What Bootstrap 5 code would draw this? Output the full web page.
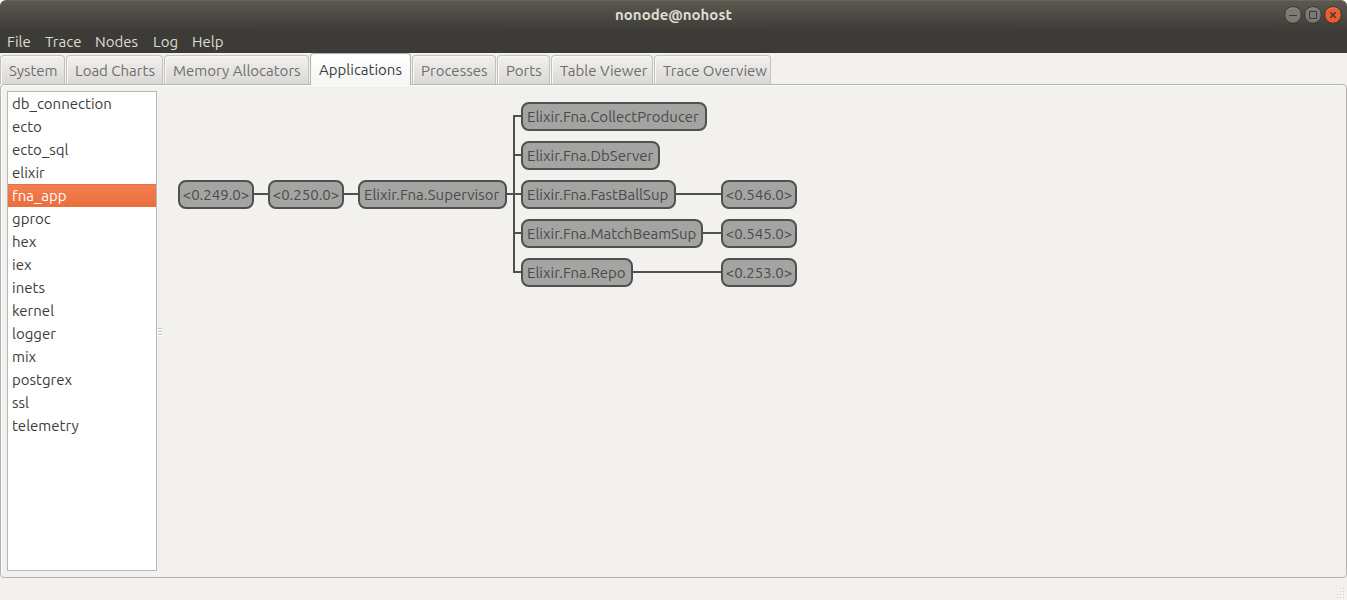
<!DOCTYPE html>
<html lang="en">
<head>
<meta charset="utf-8">
<meta name="viewport" content="width=device-width, initial-scale=1">
<title>nonode@nohost</title>
<link href="https://cdn.jsdelivr.net/npm/bootstrap@5.3.0/dist/css/bootstrap.min.css" rel="stylesheet">
<style>
  body { font-family: Ubuntu, "Noto Sans", sans-serif; font-size: 15px; line-height: 24px; color: #3c3c3c; background: #fff; }
  button { font: inherit; }
  .app-window { background: #f2f1ef; border-radius: 6px 6px 0 0; }

  /* title bar and menu */
  .window-head { height: 53px; background: linear-gradient(#5c584f 0, #3c3b37 30px); border-top: 1px solid #68655c; border-radius: 6px 6px 0 0; color: #dfdbd2; }
  .title-row { height: 29px; }
  .title-row h1 { font-size: 15px; font-weight: 700; line-height: 28px; }
  .window-buttons { right: 4px; top: 4px; }
  .window-buttons button { width: 20px; height: 20px; }
  .menu-row { display: grid; grid-template-columns: 38px 50px 58px 39px 40px; padding-left: 7px; }
  .menu-row a { color: #dfdbd2; text-decoration: none; white-space: nowrap; }

  /* tabs */
  .tab-strip { display: grid; grid-template-columns: 65px 97px 145px 101px 84px 53px 102px 117px; column-gap: 1px; height: 32px; margin-bottom: -1px; border: 0; align-items: end; position: relative; }
  .tab-strip .nav-link { width: 100%; height: 29px; margin: 0 0 1px; padding: 0 0 0 8px; line-height: 25px; text-align: left; white-space: nowrap; color: #6e6e6c; border: 1px solid #c4c2bd; border-bottom: 0; border-radius: 4px 4px 0 0; background: linear-gradient(#f2f1f0, #dad8d5); box-shadow: inset 1px 1px #f8f8f7; }
  .tab-strip .nav-link.active { height: 32px; margin: 0; padding-top: 1px; line-height: 30px; color: #3c3c3c; border-color: #b3b1ac; background: linear-gradient(#fff, #f5f5f4); }

  /* pane */
  .pane { border: 1px solid #b5b3ae; border-radius: 4px; padding: 6px; box-shadow: inset 1px 1px #fff; }
  .app-list { width: 150px; border: 1px solid #bab8b3; border-radius: 0; background: #fff; }
  .app-list .list-group-item { border: 0; padding: 0 4px; height: 23px; color: #3c3c3c; background: #fff; }
  .app-list .list-group-item.active { margin: 0; color: #fff; background: linear-gradient(#f37f50, #eb6e3c); box-shadow: inset 0 1px #e4733f; }
  .sash { width: 8px; }
  .sash svg { display: block; }
  .tree-canvas { min-width: 640px; }
  .status { height: 22px; }

  /* process tree: node positions on the canvas */
  .tree-canvas svg { position: absolute; left: 0; top: 0; }
  .proc { position: absolute; height: 29px; padding: 0 0 0 4px; line-height: 25px; text-align: left; white-space: nowrap; color: #4b4b4a; background: #a4a4a2; border: 2px solid #50504e; border-radius: 8px; }
  .pid { width: 76px; padding: 0; text-align: center; }
  .row-a { top: 11px; } .row-b { top: 50px; } .row-c { top: 89px; } .row-d { top: 128px; } .row-e { top: 167px; }
  .level-1 { left: 13px; } .level-2 { left: 103px; } .level-3 { left: 193px; } .level-4 { left: 356px; } .level-5 { left: 556px; }
  .supervisor { width: 149px; } .producer { width: 186px; } .db { width: 139px; } .fastball { width: 155px; } .matchbeam { width: 182px; } .repo { width: 112px; }
</style>
</head>
<body>
<div class="app-window d-flex flex-column min-vh-100">
  <header class="window-head">
    <div class="title-row position-relative text-center">
      <h1 class="m-0">nonode@nohost</h1>
      <div class="window-buttons position-absolute d-flex">
        <button class="border-0 bg-transparent p-0 d-flex" type="button" aria-label="Minimize">
          <svg width="20" height="20" viewBox="0 0 20 20"><circle cx="10" cy="10" r="8.3" fill="#7c7a73" stroke="#35342f"/><path d="M3 7a8 8 0 0 1 14 0" fill="none" stroke="#918f87"/><path d="M6 10.5h8" stroke="#3c3b37"/></svg>
        </button>
        <button class="border-0 bg-transparent p-0 d-flex" type="button" aria-label="Maximize">
          <svg width="20" height="20" viewBox="0 0 20 20"><circle cx="10" cy="10" r="8.3" fill="#7c7a73" stroke="#35342f"/><path d="M3 7a8 8 0 0 1 14 0" fill="none" stroke="#918f87"/><path d="M6.500 6.500h7v7h-7z" fill="none" stroke="#3c3b37"/></svg>
        </button>
        <button class="border-0 bg-transparent p-0 d-flex" type="button" aria-label="Close">
          <svg width="20" height="20" viewBox="0 0 20 20"><circle cx="10" cy="10" r="8.3" fill="#ed5c2e" stroke="#35342f"/><path d="M3 7a8 8 0 0 1 14 0" fill="none" stroke="#f48157"/><path d="M7.300 7.300l5.400 5.400m0-5.400l-5.400 5.400" stroke="#3c3b37" stroke-width="1.500"/></svg>
        </button>
      </div>
    </div>
    <nav class="menu-row" aria-label="Menu"><a href="#">File</a><a href="#">Trace</a><a href="#">Nodes</a><a href="#">Log</a><a href="#">Help</a></nav>
  </header>

  <div class="nav nav-tabs tab-strip" role="tablist">
    <button class="nav-link" type="button" role="tab">System</button>
    <button class="nav-link" type="button" role="tab">Load Charts</button>
    <button class="nav-link" type="button" role="tab">Memory Allocators</button>
    <button class="nav-link active" type="button" role="tab" aria-selected="true">Applications</button>
    <button class="nav-link" type="button" role="tab">Processes</button>
    <button class="nav-link" type="button" role="tab">Ports</button>
    <button class="nav-link" type="button" role="tab">Table Viewer</button>
    <button class="nav-link" type="button" role="tab">Trace Overview</button>
  </div>

  <main class="pane d-flex flex-grow-1">
    <div class="list-group app-list flex-shrink-0">
      <button type="button" class="list-group-item list-group-item-action">db_connection</button>
      <button type="button" class="list-group-item list-group-item-action">ecto</button>
      <button type="button" class="list-group-item list-group-item-action">ecto_sql</button>
      <button type="button" class="list-group-item list-group-item-action">elixir</button>
      <button type="button" class="list-group-item list-group-item-action active">fna_app</button>
      <button type="button" class="list-group-item list-group-item-action">gproc</button>
      <button type="button" class="list-group-item list-group-item-action">hex</button>
      <button type="button" class="list-group-item list-group-item-action">iex</button>
      <button type="button" class="list-group-item list-group-item-action">inets</button>
      <button type="button" class="list-group-item list-group-item-action">kernel</button>
      <button type="button" class="list-group-item list-group-item-action">logger</button>
      <button type="button" class="list-group-item list-group-item-action">mix</button>
      <button type="button" class="list-group-item list-group-item-action">postgrex</button>
      <button type="button" class="list-group-item list-group-item-action">ssl</button>
      <button type="button" class="list-group-item list-group-item-action">telemetry</button>
    </div>
    <div class="sash d-flex align-items-center flex-shrink-0">
      <svg width="6" height="10" viewBox="0 0 6 10" aria-hidden="true"><path d="M1 2.500h4M1 5.500h4M1 8.500h4" stroke="#c8c6c2"/><path d="M1 3.500h4M1 6.500h4M1 9.500h4" stroke="#fff"/></svg>
    </div>
    <section class="tree-canvas position-relative flex-grow-1" aria-label="Supervision tree">
      <svg width="640" height="200" viewBox="0 0 640 200" aria-hidden="true"><path d="M80 103H360M360 25H349V181H360M349 64H360M349 142H360M500 103H560M530 142H560M460 181H560" fill="none" stroke="#50504e" stroke-width="2"/></svg>
      <button type="button" class="proc pid level-1 row-c">&lt;0.249.0&gt;</button>
      <button type="button" class="proc pid level-2 row-c">&lt;0.250.0&gt;</button>
      <button type="button" class="proc supervisor level-3 row-c">Elixir.Fna.Supervisor</button>
      <button type="button" class="proc producer level-4 row-a">Elixir.Fna.CollectProducer</button>
      <button type="button" class="proc db level-4 row-b">Elixir.Fna.DbServer</button>
      <button type="button" class="proc fastball level-4 row-c">Elixir.Fna.FastBallSup</button>
      <button type="button" class="proc matchbeam level-4 row-d">Elixir.Fna.MatchBeamSup</button>
      <button type="button" class="proc repo level-4 row-e">Elixir.Fna.Repo</button>
      <button type="button" class="proc pid level-5 row-c">&lt;0.546.0&gt;</button>
      <button type="button" class="proc pid level-5 row-d">&lt;0.545.0&gt;</button>
      <button type="button" class="proc pid level-5 row-e">&lt;0.253.0&gt;</button>
    </section>
  </main>
  <footer class="status d-flex justify-content-end align-items-end">
    <svg width="14" height="14" viewBox="0 0 14 14" aria-hidden="true"><path d="M10 2h1v1h-1zM7 5h1v1h-1zM10 5h1v1h-1zM4 8h1v1h-1zM7 8h1v1h-1zM10 8h1v1h-1zM1 11h1v1h-1zM4 11h1v1h-1zM7 11h1v1h-1zM10 11h1v1h-1z" fill="#d2d0cc"/><path d="M11 3h1v1h-1zM8 6h1v1h-1zM11 6h1v1h-1zM5 9h1v1h-1zM8 9h1v1h-1zM11 9h1v1h-1zM2 12h1v1h-1zM5 12h1v1h-1zM8 12h1v1h-1zM11 12h1v1h-1z" fill="#fff"/></svg>
  </footer>
</div>
<script src="https://cdn.jsdelivr.net/npm/bootstrap@5.3.0/dist/js/bootstrap.bundle.min.js"></script>
</body>
</html>
